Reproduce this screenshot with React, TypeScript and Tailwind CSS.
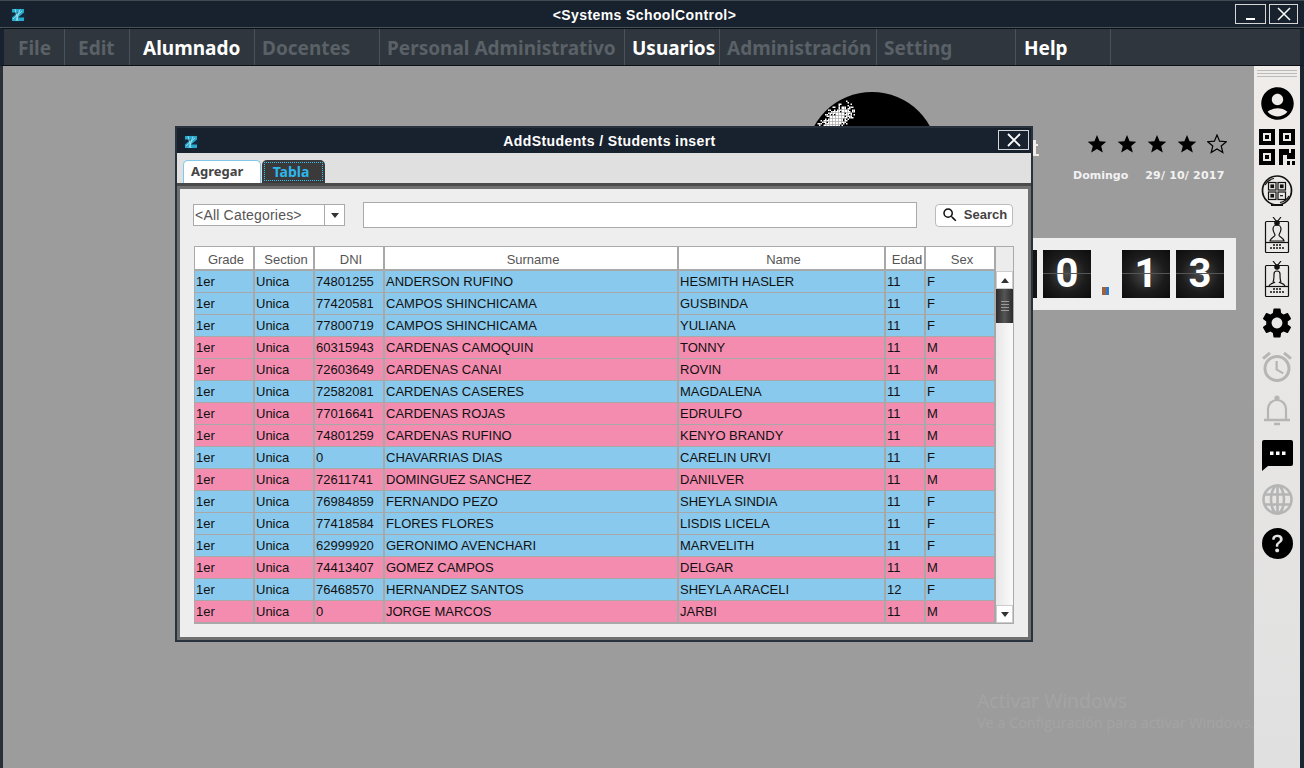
import type { ReactNode } from "react";
import { MdAccountCircle, MdSettings, MdOutlineAlarm, MdOutlineSearch } from "react-icons/md";
import { BsQuestionCircleFill } from "react-icons/bs";

type Student = { dni: string; surname: string; name: string; edad: string; sex: string };

const students: Student[] = [
  { dni: "74801255", surname: "ANDERSON RUFINO", name: "HESMITH HASLER", edad: "11", sex: "F" },
  { dni: "77420581", surname: "CAMPOS SHINCHICAMA", name: "GUSBINDA", edad: "11", sex: "F" },
  { dni: "77800719", surname: "CAMPOS SHINCHICAMA", name: "YULIANA", edad: "11", sex: "F" },
  { dni: "60315943", surname: "CARDENAS CAMOQUIN", name: "TONNY", edad: "11", sex: "M" },
  { dni: "72603649", surname: "CARDENAS CANAI", name: "ROVIN", edad: "11", sex: "M" },
  { dni: "72582081", surname: "CARDENAS CASERES", name: "MAGDALENA", edad: "11", sex: "F" },
  { dni: "77016641", surname: "CARDENAS ROJAS", name: "EDRULFO", edad: "11", sex: "M" },
  { dni: "74801259", surname: "CARDENAS RUFINO", name: "KENYO BRANDY", edad: "11", sex: "M" },
  { dni: "0", surname: "CHAVARRIAS DIAS", name: "CARELIN URVI", edad: "11", sex: "F" },
  { dni: "72611741", surname: "DOMINGUEZ SANCHEZ", name: "DANILVER", edad: "11", sex: "M" },
  { dni: "76984859", surname: "FERNANDO PEZO", name: "SHEYLA SINDIA", edad: "11", sex: "F" },
  { dni: "77418584", surname: "FLORES FLORES", name: "LISDIS LICELA", edad: "11", sex: "F" },
  { dni: "62999920", surname: "GERONIMO AVENCHARI", name: "MARVELITH", edad: "11", sex: "F" },
  { dni: "74413407", surname: "GOMEZ CAMPOS", name: "DELGAR", edad: "11", sex: "M" },
  { dni: "76468570", surname: "HERNANDEZ SANTOS", name: "SHEYLA ARACELI", edad: "12", sex: "F" },
  { dni: "0", surname: "JORGE MARCOS", name: "JARBI", edad: "11", sex: "M" },
];

const menu = [
  { label: "File", box: "w-[60px] pl-[13px]", on: false },
  { label: "Edit", box: "w-[65px] pl-[13px]", on: false },
  { label: "Alumnado", box: "w-[125px] pl-[13px]", on: true },
  { label: "Docentes", box: "w-[125px] pl-[7px]", on: false },
  { label: "Personal Administrativo", box: "w-[245px] pl-[7px]", on: false },
  { label: "Usuarios", box: "w-[95px] pl-[7px]", on: true },
  { label: "Administración", box: "w-[157px] pl-[7px]", on: false },
  { label: "Setting", box: "w-[139px] pl-[7px]", on: false },
  { label: "Help", box: "w-[95px] pl-[8px]", on: true },
];

const headers = [
  { label: "Grade", w: "w-[60px]" },
  { label: "Section", w: "w-[60px]" },
  { label: "DNI", w: "w-[70px]" },
  { label: "Surname", w: "w-[294px]" },
  { label: "Name", w: "w-[207px]" },
  { label: "Edad", w: "w-[40px]" },
  { label: "Sex", w: "w-[70px]" },
];

// white speckle on the black disc behind the dialog
function speckles() {
  const out: { x: number; y: number }[] = [];
  let seed = 7;
  for (let y = 2; y < 38; y += 1.5) {
    for (let x = 6; x < 56; x += 1.5) {
      seed = (seed * 137 + 41) % 1009;
      const dx = (x - 26 - (24 - y) * 0.6) / 17;
      const dy = (y - 24) / 19;
      const d = dx * dx + dy * dy;
      if (d < 1 && seed / 1009 > d * 1.1 - 0.05) out.push({ x, y });
    }
  }
  return out;
}

function Logo() {
  return (
    <svg width="16" height="16" viewBox="0 0 16 16">
      <circle cx="8" cy="8" r="8" fill="#13293a" />
      <path d="M2 2h12v3.500L8 10.500h6V14H2v-3.500L8 5.500H2z" fill="#27a9cc" />
      <path d="M5 2l3 12M10 2.500L6 14M3 12l9-8" stroke="#a9e6f5" strokeWidth="0.8" />
    </svg>
  );
}

function QrIcon() {
  return (
    <svg width="36" height="36" viewBox="0 0 36 36" fill="#000">
      <path fillRule="evenodd" d="M0 0h16v16H0zM4 4v8h8V4zM20 0h16v16H20zM24 4v8h8V4zM0 20h16v16H0zM4 24v8h8v-8z" />
      <rect x="6" y="6" width="4" height="4" />
      <rect x="26" y="6" width="4" height="4" />
      <rect x="6" y="26" width="4" height="4" />
      <path d="M20 20h10v4h2v-4h4v10h-8v-4h-4v10h-4z" />
      <rect x="28" y="32" width="3" height="4" />
      <rect x="33" y="32" width="3" height="4" />
    </svg>
  );
}

function QrRound() {
  return (
    <svg width="32" height="32" viewBox="0 0 32 32" fill="none" stroke="#111" strokeWidth="1.2">
      <circle cx="16" cy="15.500" r="14.500" strokeWidth="1.700" />
      <path d="M4 10a13 13 0 0 1 9-6.500M28 21a13 13 0 0 1-9 6.500" />
      <path d="M10 30h12" strokeWidth="2" />
      <rect x="7.500" y="7.500" width="7.500" height="7.500" />
      <rect x="17" y="7.500" width="7.500" height="7.500" />
      <rect x="7.500" y="17" width="7.500" height="7.500" />
      <rect x="17" y="17" width="7.500" height="7.500" />
      <rect x="10" y="10" width="2.500" height="2.500" fill="#111" />
      <rect x="19.500" y="10" width="2.500" height="2.500" fill="#111" />
      <rect x="10" y="19.500" width="2.500" height="2.500" fill="#111" />
      <path d="M19 20.700h3" />
    </svg>
  );
}

function BadgeIcon({ female }: { female?: boolean }) {
  return (
    <svg width="26" height="36" viewBox="0 0 26 36" fill="none" stroke="#111" strokeWidth="1.2">
      <rect x="1.500" y="4.500" width="23" height="31" rx="1" />
      <path d="M9 0l4 5 4-5" />
      <circle cx="13" cy="6" r="2.200" fill="#111" />
      {female ? (
        <path d="M9 21c1-2 1-7 1-8a3 3 0 0 1 6 0c0 1 0 6 1 8M5 25c1-3 5-3 6-4M21 25c-1-3-5-3-6-4" />
      ) : (
        <path d="M9 12a4 4 0 0 1 8 0c0 3-2 5-2 6 0 2 4 2 5 6H6c1-4 5-4 5-6 0-1-2-3-2-6z" />
      )}
      <path d="M1.500 25.500h23" />
      <path d="M9 28h8M6 31h14" strokeDasharray="2 1" strokeWidth="1.700" />
    </svg>
  );
}

function BellIcon() {
  return (
    <svg width="30" height="32" viewBox="0 0 30 32" fill="none" stroke="#b5b5b5" strokeWidth="2.200">
      <circle cx="15" cy="3" r="1.500" fill="#b5b5b5" />
      <path d="M6 24V14a9 9 0 0 1 18 0v10" />
      <path d="M2 25h26" strokeWidth="2.500" />
      <path d="M12 29h6" strokeWidth="2.500" />
    </svg>
  );
}

function ChatIcon() {
  return (
    <svg width="31" height="31" viewBox="0 0 31 31" fill="#000">
      <path d="M2 0h27a2 2 0 0 1 2 2v22a2 2 0 0 1-2 2H6l-6 5V2a2 2 0 0 1 2-2z" />
      <rect x="8" y="11.500" width="3.500" height="3.500" fill="#fff" />
      <rect x="14" y="11.500" width="3.500" height="3.500" fill="#fff" />
      <rect x="20" y="11.500" width="3.500" height="3.500" fill="#fff" />
    </svg>
  );
}

function GlobeIcon() {
  return (
    <svg width="31" height="31" viewBox="0 0 31 31" fill="none" stroke="#b5b5b5" strokeWidth="2.600">
      <circle cx="15.500" cy="15.500" r="14" />
      <ellipse cx="15.500" cy="15.500" rx="6.500" ry="14" />
      <path d="M15.500 1.500v28M2.500 10.500h26M2.500 20.500h26" />
    </svg>
  );
}

function Star({ filled }: { filled: boolean }) {
  return (
    <svg width="20" height="20" viewBox="0 0 20 20">
      <path
        d="M10 1l2.600 6.200 6.700.5-5.100 4.300 1.600 6.500L10 15l-5.800 3.500 1.600-6.500L.7 7.700l6.700-.5z"
        fill={filled ? "#000" : "none"}
        stroke="#000"
        strokeWidth={filled ? 0 : 1.200}
      />
    </svg>
  );
}

function FlipCard({ digit }: { digit: string }) {
  return (
    <div className="relative flex h-12 w-12 shrink-0 items-center justify-center bg-[radial-gradient(ellipse_at_center,#4a4a4a_0%,#1c1c1c_55%,#0c0c0c_100%)] font-['Roboto',sans-serif] text-[40px] font-bold leading-none text-white">
      {digit}
      <div className="absolute left-0 right-0 top-[23px] h-px bg-[#555]" />
    </div>
  );
}

function Arrow({ up }: { up?: boolean }) {
  return (
    <div
      className={
        up
          ? "h-0 w-0 border-x-[4px] border-b-[5px] border-x-transparent border-b-[#333]"
          : "h-0 w-0 border-x-[4px] border-t-[5px] border-x-transparent border-t-[#333]"
      }
    />
  );
}

function Slot({ children }: { children: ReactNode }) {
  return <div className="flex h-[44px] w-full items-center justify-center">{children}</div>;
}

export default function App() {
  return (
    <div className="relative flex h-[768px] w-[1304px] flex-col overflow-hidden bg-[#9c9c9c] font-['Liberation_Sans',sans-serif]">
      {/* window title */}
      <div className="relative flex h-[28px] shrink-0 items-center justify-center border-t border-t-[#3f4a52] border-b border-b-[#46525c] bg-[#18222e] pr-[15px] pt-[3px]">
        <div className="absolute left-[10px] top-[6px]">
          <Logo />
        </div>
        <span className="text-[14px] font-bold tracking-[0.4px] text-white">&lt;Systems SchoolControl&gt;</span>
        <div className="absolute right-[6px] top-[3px] flex gap-[3px]">
          <div className="flex h-[20px] w-[31px] items-end justify-center border border-[#d6d6d6] pb-[3px]">
            <div className="h-[2px] w-[9px] bg-white" />
          </div>
          <div className="flex h-[20px] w-[29px] items-center justify-center border border-[#d6d6d6]">
            <svg width="14" height="14" viewBox="0 0 14 14" stroke="#fff" strokeWidth="1.500">
              <path d="M1 1l12 12M13 1L1 13" />
            </svg>
          </div>
        </div>
      </div>

      {/* menu */}
      <div className="flex h-[38px] shrink-0 border-y border-y-[#0c0f13] border-x-[4px] border-x-[#18222e] bg-[#2f363d] pl-[1px]">
        {menu.map((m) => (
          <div
            key={m.label}
            className={`${m.box} flex shrink-0 items-center whitespace-nowrap border-r border-r-[#4a535b] pt-[3px] font-['Noto_Sans',sans-serif] text-[19px] font-bold ${
              m.on ? "text-white" : "text-[#5a6167]"
            }`}
          >
            {m.label}
          </div>
        ))}
      </div>

      {/* desktop */}
      <div className="relative flex min-h-0 flex-1 justify-end border-l-[3px] border-l-[#2a3036]">
        <div className="absolute left-[803px] top-[26px] h-[132px] w-[132px] rounded-full bg-black" />
        <svg width="60" height="40" viewBox="0 0 60 40" className="absolute left-[807px] top-[28px]">
          {speckles().map((p, i) => (
            <rect key={i} x={p.x} y={p.y} width="1.500" height="1.500" fill="#fff" />
          ))}
        </svg>

        {/* tail of the clock label sticking out from behind the dialog */}
        <div className="absolute left-[1030px] top-[74px] h-[16px] w-[3px] bg-[#f4ece6]" />
        <div className="absolute left-[1030px] top-[78px] h-[2px] w-[5px] bg-[#f4ece6]" />
        <div className="absolute left-[1030px] top-[88px] h-[2px] w-[6px] bg-[#f4ece6]" />

        <div className="absolute left-[1084px] top-[68px] flex gap-[10px]">
          <Star filled />
          <Star filled />
          <Star filled />
          <Star filled />
          <Star filled={false} />
        </div>
        <div className="absolute left-[1070px] top-[102px] flex gap-[17px] font-['DejaVu_Sans',sans-serif] text-[11px] font-bold text-[#f2f2f2]">
          <span>Domingo</span>
          <span className="tracking-[0.2px]">29/ 10/ 2017</span>
        </div>

        <div className="absolute left-[1029px] top-[172px] flex h-[72px] w-[204px] items-center bg-[#eeeeee]">
          <div className="mr-[6px] h-12 w-[5px] bg-[#141414]" />
          <FlipCard digit="0" />
          <div className="ml-[11px] mr-[13px] mt-[34px] h-[8px] w-[7px] bg-[linear-gradient(90deg,#a0603a_50%,#2a78c8_50%)]" />
          <FlipCard digit="1" />
          <div className="w-[6px]" />
          <FlipCard digit="3" />
        </div>

        <div className="absolute bottom-[35px] left-[974px] whitespace-nowrap font-['Open_Sans',sans-serif] text-[19.500px] leading-[24px] text-[#a4a4a4]">
          Activar Windows
          <div className="text-[14.400px] leading-[20px]">Ve a Configuración para activar Windows.</div>
        </div>

        {/* side bar */}
        <div className="flex w-[50px] flex-col items-center border-r-[4px] border-r-[#1c2630] bg-[linear-gradient(180deg,#efecea,#e0e0e0)]">
          <div className="mt-[4px] flex w-[40px] flex-col gap-[2px]">
            <div className="h-px bg-[#bbb]" />
            <div className="h-px bg-[#bbb]" />
            <div className="h-px bg-[#bbb]" />
          </div>
          <div className="mt-[4px] flex w-full flex-col items-center">
            <Slot>
              <MdAccountCircle size={39} color="#000" />
            </Slot>
            <Slot>
              <QrIcon />
            </Slot>
            <Slot>
              <QrRound />
            </Slot>
            <Slot>
              <BadgeIcon />
            </Slot>
            <Slot>
              <BadgeIcon female />
            </Slot>
            <Slot>
              <MdSettings size={36} color="#000" />
            </Slot>
            <Slot>
              <MdOutlineAlarm size={36} color="#b5b5b5" />
            </Slot>
            <Slot>
              <BellIcon />
            </Slot>
            <Slot>
              <ChatIcon />
            </Slot>
            <Slot>
              <GlobeIcon />
            </Slot>
            <Slot>
              <BsQuestionCircleFill size={31} color="#000" />
            </Slot>
          </div>
        </div>
      </div>

      {/* AddStudents dialog */}
      <div className="absolute left-[175px] top-[126px] flex h-[516px] w-[858px] flex-col border-[2px] border-[#27323c] bg-[#e0e0e0]">
        <div className="relative flex h-[25px] shrink-0 items-center justify-center bg-[#18222e] pl-[11px] pt-[2px]">
          <div className="absolute left-[6px] top-[6px]">
            <Logo />
          </div>
          <span className="text-[14px] font-bold tracking-[0.4px] text-white">AddStudents / Students insert</span>
          <div className="absolute right-[2px] top-[2px] flex h-[20px] w-[31px] items-center justify-center border border-[#d6d6d6]">
            <svg width="14" height="14" viewBox="0 0 14 14" stroke="#fff" strokeWidth="1.800">
              <path d="M1 1l12 12M13 1L1 13" />
            </svg>
          </div>
        </div>

        {/* tabs */}
        <div className="flex h-[33px] shrink-0 items-end gap-px border-b-[3px] border-b-[#4a4a4a] pl-[6px]">
          <div className="flex h-[23px] w-[78px] items-center rounded-t-[5px] border border-b-0 border-[#7fc8ea] bg-white pl-[7px] font-['Noto_Sans',sans-serif] text-[13px] font-bold text-[#444]">
            Agregar
          </div>
          <div className="flex h-[23px] w-[63px] items-center justify-center rounded-t-[5px] bg-[#3a3a3a] p-[2px]">
            <div className="flex h-full w-full items-center justify-center border border-dotted border-[#3bc0f0] pb-[1px] pr-[5px] font-['Noto_Sans',sans-serif] text-[14px] font-bold text-[#2cb8ee]">
              Tabla
            </div>
          </div>
        </div>

        {/* tab panel */}
        <div className="flex min-h-0 flex-1 flex-col border-[3px] border-[#707070] bg-[#eeeeee] pl-[13px] pr-[14px] pt-[13px]">
          <div className="flex h-[26px] items-center">
            <div className="flex h-[22px] w-[152px] border border-[#aaa] bg-white text-[14px] tracking-[0.2px] text-[#555]">
              <span className="flex-1 pl-[1px] leading-[20px]">&lt;All Categories&gt;</span>
              <div className="flex w-[20px] items-center justify-center border-l border-l-[#aaa]">
                <Arrow />
              </div>
            </div>
            <div className="ml-[18px] h-[26px] w-[554px] border border-[#aaa] bg-white" />
            <div className="ml-[18px] flex h-[23px] w-[78px] items-center justify-center gap-[5px] rounded-[4px] border border-[#bbb] bg-white text-[13px] font-bold text-[#444]">
              <MdOutlineSearch size={18} color="#111" />
              Search
            </div>
          </div>

          {/* table */}
          <div className="ml-[1px] mt-[18px] w-[820px] border border-[#aaa]">
            <div className="flex h-[24px]">
              {headers.map((h) => (
                <div
                  key={h.label}
                  className={`${h.w} flex shrink-0 items-center justify-center border-b-[2px] border-r-[2px] border-[#a8a8a8] bg-white pl-[4px] pt-[4px] text-[13px] text-[#555]`}
                >
                  {h.label}
                </div>
              ))}
              <div className="flex-1 bg-[#ececec]" />
            </div>
            <div className="flex h-[352px]">
              <div className="flex w-[801px] shrink-0 flex-col">
                {students.map((s, i) => (
                  <div
                    key={i}
                    className={`flex h-[22px] shrink-0 border-b border-b-[#a8a8a8] text-[13px] leading-[21px] text-[#111] ${
                      s.sex === "F" ? "bg-[#89c9ed]" : "bg-[#f48cb0]"
                    }`}
                  >
                    <div className="w-[60px] shrink-0 border-r-[2px] border-r-[#a8a8a8] pl-[1px]">1er</div>
                    <div className="w-[60px] shrink-0 border-r-[2px] border-r-[#a8a8a8] pl-[1px]">Unica</div>
                    <div className="w-[70px] shrink-0 border-r-[2px] border-r-[#a8a8a8] pl-[1px]">{s.dni}</div>
                    <div className="w-[294px] shrink-0 border-r-[2px] border-r-[#a8a8a8] pl-[1px]">{s.surname}</div>
                    <div className="w-[207px] shrink-0 border-r-[2px] border-r-[#a8a8a8] pl-[1px]">{s.name}</div>
                    <div className="w-[40px] shrink-0 border-r-[2px] border-r-[#a8a8a8] pl-[1px]">{s.edad}</div>
                    <div className="w-[70px] shrink-0 border-r-[2px] border-r-[#a8a8a8] pl-[1px]">{s.sex}</div>
                  </div>
                ))}
              </div>
              <div className="flex min-w-0 flex-1 flex-col bg-[linear-gradient(90deg,#e8e8e8,#fafafa)]">
                <div className="flex h-[18px] shrink-0 items-center justify-center border border-[#ccc] bg-white">
                  <Arrow up />
                </div>
                <div className="flex h-[34px] shrink-0 flex-col items-center justify-center gap-[2px] bg-[linear-gradient(90deg,#2b2b2b,#555,#2b2b2b)]">
                  <div className="h-px w-[8px] bg-[#999]" />
                  <div className="h-px w-[8px] bg-[#999]" />
                  <div className="h-px w-[8px] bg-[#999]" />
                  <div className="h-px w-[8px] bg-[#999]" />
                </div>
                <div className="flex-1" />
                <div className="flex h-[18px] shrink-0 items-center justify-center border border-[#ccc] bg-white">
                  <Arrow />
                </div>
              </div>
            </div>
          </div>
        </div>
      </div>
    </div>
  );
}
